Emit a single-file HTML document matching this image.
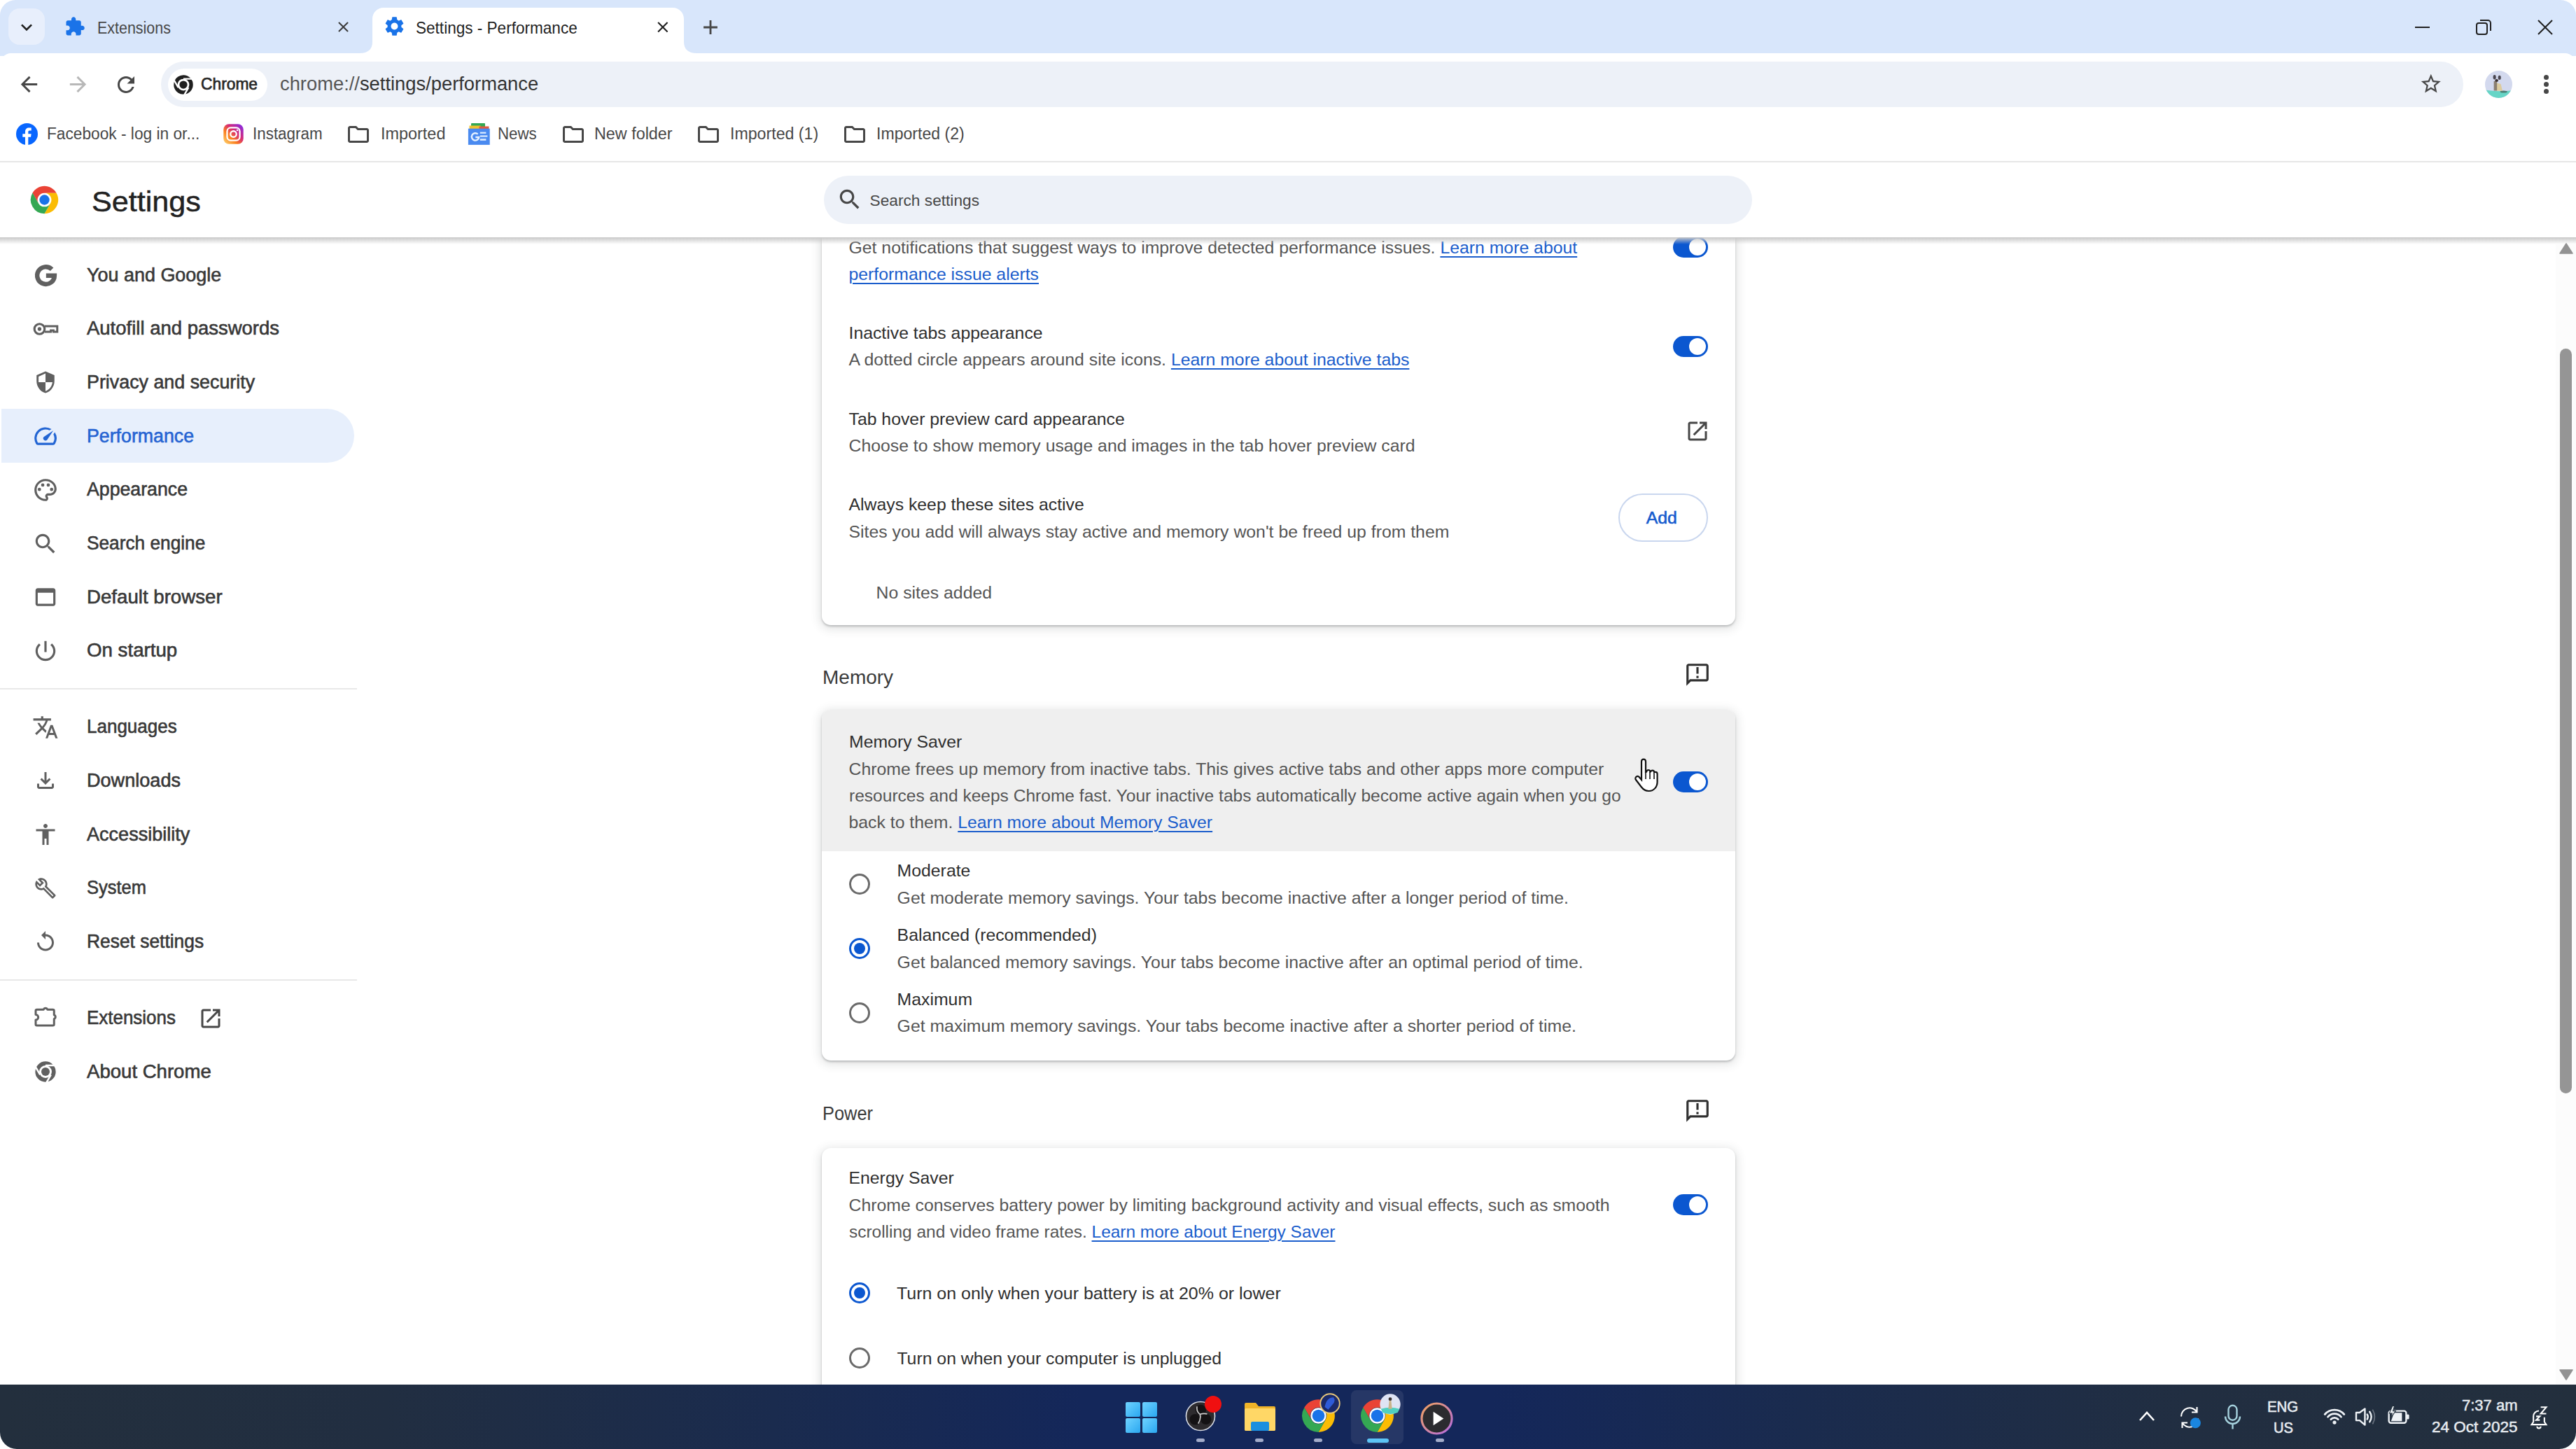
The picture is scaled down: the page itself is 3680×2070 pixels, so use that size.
<!DOCTYPE html>
<html><head><meta charset="utf-8"><title>Settings - Performance</title>
<style>
html,body{margin:0;padding:0;}
body{width:3680px;height:2070px;position:relative;overflow:hidden;background:#fff;font-family:"Liberation Sans",sans-serif;}
.t{position:absolute;white-space:pre;}
.b{position:absolute;}
</style></head><body>
<div class="b" style="left:0px;top:0px;width:3680px;height:80px;background:#d8e6fb;"></div>
<div class="b" style="left:12px;top:12px;width:52px;height:52px;background:#e8effc;border-radius:16px;"></div>
<svg class="b" style="left:22.0px;top:23.0px;" width="32.0" height="32.0" viewBox="0 0 24 24"><path fill="#1f1f1f" d="M16.59 8.59L12 13.17 7.41 8.59 6 10l6 6 6-6z"/></svg>
<svg class="b" style="left:92.0px;top:23.3px;" width="30.0" height="30.0" viewBox="0 0 24 24"><path fill="#1a73e8" d="M20.5 11H19V7c0-1.1-.9-2-2-2h-4V3.5C13 2.12 11.88 1 10.5 1S8 2.12 8 3.5V5H4c-1.1 0-1.99.9-1.99 2v3.8H3.5c1.49 0 2.7 1.21 2.7 2.7s-1.21 2.7-2.7 2.7H2V20c0 1.1.9 2 2 2h3.8v-1.5c0-1.49 1.21-2.7 2.7-2.7 1.49 0 2.7 1.21 2.7 2.7V22H17c1.1 0 2-.9 2-2v-4h1.5c1.380 0 2.5-1.12 2.5-2.5S21.88 11 20.5 11z"/></svg>
<div class="t" style="left:139.0px;top:28.5px;font-size:23px;line-height:23px;color:#474747;font-weight:400;transform:scaleX(0.932);transform-origin:0 0;">Extensions</div>
<svg class="b" style="left:477.5px;top:26.1px;" width="25.0" height="25.0" viewBox="0 0 24 24"><path fill="#3c3c3c" d="M19 6.41L17.59 5 12 10.59 6.41 5 5 6.41 10.59 12 5 17.59 6.41 19 12 13.41 17.59 19 19 17.59 13.410 12z"/></svg>
<svg class="b" style="left:514px;top:10px" width="481" height="70" viewBox="0 0 481 70"><path fill="#fff" d="M0 66 C12 66 18 60 18 50 L18 17 C18 8 25 1 34 1 L447 1 C456 1 463 8 463 17 L463 50 C463 60 469 66 481 66 L481 70 L0 70 Z"/></svg>
<svg class="b" style="left:547.0px;top:20.8px;" width="33.0" height="33.0" viewBox="0 0 24 24"><path fill="#1a73e8" d="M19.14 12.94c.04-.3.06-.61.06-.94 0-.32-.02-.64-.07-.94l2.03-1.58c.18-.14.23-.41.12-.61l-1.92-3.32c-.12-.22-.37-.29-.59-.22l-2.39.96c-.5-.38-1.03-.7-1.62-.94l-.36-2.54c-.04-.24-.24-.41-.48-.41h-3.84c-.24 0-.43.17-.47.41l-.36 2.54c-.59.24-1.13.57-1.62.94l-2.39-.96c-.22-.08-.47 0-.59.22L2.74 8.87c-.12.21-.08.47.12.61l2.03 1.58c-.05.3-.09.63-.09.94s.02.64.07.94l-2.03 1.58c-.18.14-.23.41-.12.61l1.92 3.32c.12.22.37.29.59.22l2.39-.96c.5.38 1.03.7 1.62.94l.36 2.54c.05.24.24.41.48.41h3.84c.24 0 .44-.17.47-.41l.36-2.54c.59-.24 1.13-.56 1.62-.94l2.39.96c.22.08.47 0 .59-.22l1.92-3.32c.12-.22.07-.47-.12-.61l-2.01-1.58zM12 15.6c-1.98 0-3.6-1.62-3.6-3.6s1.62-3.6 3.6-3.6 3.6 1.62 3.6 3.6-1.62 3.6-3.6 3.6z"/></svg>
<div class="t" style="left:594.3px;top:27.5px;font-size:24px;line-height:24px;color:#1f1f1f;font-weight:400;transform:scaleX(0.94);transform-origin:0 0;">Settings - Performance</div>
<svg class="b" style="left:933.6px;top:25.5px;" width="25.7" height="25.7" viewBox="0 0 24 24"><path fill="#1f1f1f" d="M19 6.41L17.59 5 12 10.59 6.41 5 5 6.41 10.59 12 5 17.59 6.41 19 12 13.41 17.59 19 19 17.59 13.410 12z"/></svg>
<svg class="b" style="left:998.4px;top:22.0px;" width="34.0" height="34.0" viewBox="0 0 24 24"><path fill="#474747" d="M19 13h-6v6h-2v-6H5v-2h6V5h2v6h6v2z"/></svg>
<div class="b" style="left:3450px;top:38px;width:21px;height:2px;background:#1f1f1f;"></div>
<svg class="b" style="left:3536px;top:27px" width="24" height="24" viewBox="0 0 24 24"><rect x="2" y="6" width="15" height="16" rx="3" fill="none" stroke="#1f1f1f" stroke-width="2"/><path d="M7 2h11a4 4 0 0 1 4 4v11" fill="none" stroke="#1f1f1f" stroke-width="2"/></svg>
<svg class="b" style="left:3624px;top:27px" width="24" height="24" viewBox="0 0 24 24"><path d="M2 2L22 22M22 2L2 22" stroke="#1f1f1f" stroke-width="2"/></svg>
<div class="b" style="left:0px;top:76px;width:3680px;height:156px;background:#fff;border-radius:16px 16px 0 0;"></div>
<svg class="b" style="left:24.3px;top:103.3px;" width="35.0" height="35.0" viewBox="0 0 24 24"><path fill="#474747" d="M20 11H7.83l5.59-5.59L12 4l-8 8 8 8 1.41-1.41L7.83 13H20v-2z"/></svg>
<svg class="b" style="left:93.5px;top:103.3px;" width="35.0" height="35.0" viewBox="0 0 24 24"><path fill="#b8b8b8" d="M12 4l-1.41 1.41L16.17 11H4v2h12.17l-5.58 5.59L12 20l8-8z"/></svg>
<svg class="b" style="left:162.0px;top:103.0px;" width="36.0" height="36.0" viewBox="0 0 24 24"><path fill="#474747" d="M17.65 6.35C16.2 4.9 14.21 4 12 4c-4.42 0-7.99 3.58-7.99 8s3.57 8 7.99 8c3.73 0 6.84-2.55 7.73-6h-2.08c-.82 2.33-3.04 4-5.65 4-3.31 0-6-2.69-6-6s2.69-6 6-6c1.66 0 3.14.69 4.22 1.78L13 11h7V4l-2.35 2.35z"/></svg>
<div class="b" style="left:230px;top:88px;width:3289px;height:65px;background:#edf1f8;border-radius:33px;"></div>
<div class="b" style="left:240px;top:98px;width:142px;height:46px;background:#fff;border-radius:23px;"></div>
<svg class="b" style="left:247px;top:106px" width="30" height="30" viewBox="0 0 24 24"><circle cx="12" cy="12" r="11" fill="#1f1f1f"/><circle cx="12" cy="12" r="6.7" fill="#fff"/><circle cx="12" cy="12" r="4.5" fill="#1f1f1f"/><path d="M12 5.3 L23 5.3 M17.8 15.35 L12.3 24.9 M6.2 15.35 L0.7 5.8" stroke="#fff" stroke-width="1.9"/></svg>
<div class="t" style="left:286.8px;top:107.8px;font-size:24.5px;line-height:24.5px;color:#262626;font-weight:400;transform:scaleX(0.93);transform-origin:0 0;-webkit-text-stroke:0.7px #262626;">Chrome</div>
<div class="t" style="left:400.0px;top:106.6px;font-size:26.8px;line-height:26.8px;color:#555555;font-weight:400;transform:scaleX(1.02);transform-origin:0 0;">chrome://<span style="color:#333">settings/performance</span></div>
<svg class="b" style="left:3455.9px;top:103.4px;" width="33.6" height="33.6" viewBox="0 0 24 24"><path fill="#474747" d="M22 9.24l-7.19-.62L12 2 9.19 8.63 2 9.24l5.46 4.73L5.82 21 12 17.27 18.18 21l-1.63-7.03L22 9.24zM12 15.4l-3.76 2.27 1-4.28-3.32-2.88 4.38-.38L12 6.1l1.71 4.04 4.38.38-3.32 2.88 1 4.28L12 15.4z"/></svg>
<svg class="b" style="left:3550px;top:101px" width="39" height="39" viewBox="0 0 38 38"><defs><clipPath id="av"><circle cx="19" cy="19" r="19"/></clipPath></defs><g clip-path="url(#av)"><rect width="38" height="38" fill="#d3d9ee"/><path d="M0 26.5 Q18 30 38 27.5 L38 38 L0 38Z" fill="#66d5c6"/><path d="M16.4 17 L22 18.5 L24.4 28 L16.4 28Z" fill="#dccb9e"/><rect x="12.3" y="14.6" width="4.4" height="13.2" fill="#8a7e70"/><ellipse cx="13.3" cy="9" rx="2" ry="3.1" fill="#4a4650"/><ellipse cx="20.2" cy="9.6" rx="2" ry="3.1" fill="#4a4650"/><ellipse cx="16.2" cy="13.6" rx="2.3" ry="1.9" fill="#3b3030"/><ellipse cx="26" cy="29.2" rx="5" ry="1.5" fill="#4b7d73"/></g></svg>
<div class="b" style="left:3634px;top:107px;width:7px;height:7px;background:#474747;border-radius:50%;"></div>
<div class="b" style="left:3634px;top:117px;width:7px;height:7px;background:#474747;border-radius:50%;"></div>
<div class="b" style="left:3634px;top:127px;width:7px;height:7px;background:#474747;border-radius:50%;"></div>
<svg class="b" style="left:23px;top:176px" width="31" height="31" viewBox="0 0 24 24"><circle cx="12" cy="12" r="12" fill="#0866ff"/><path d="M13.4 24V15.2h2.9l.45-3.4H13.4V9.7c0-1 .3-1.6 1.7-1.6h1.75V5.1c-.3 0-1.35-.13-2.55-.13-2.5 0-4.25 1.53-4.25 4.35v2.5H7.2v3.4h2.85V24z" fill="#fff"/></svg>
<div class="t" style="left:66.6px;top:180.2px;font-size:23px;line-height:23px;color:#474747;font-weight:400;transform:scaleX(0.987);transform-origin:0 0;">Facebook - log in or...</div>
<svg class="b" style="left:318px;top:176px" width="31" height="31" viewBox="0 0 24 24"><defs><linearGradient id="ig" x1="0" y1="1" x2="1" y2="0"><stop offset="0" stop-color="#feda75"/><stop offset=".35" stop-color="#fa7e1e"/><stop offset=".6" stop-color="#d62976"/><stop offset="1" stop-color="#7a2bf5"/></linearGradient></defs><rect x="1" y="1" width="22" height="22" rx="6" fill="url(#ig)"/><rect x="5" y="5" width="14" height="14" rx="4" fill="none" stroke="#fff" stroke-width="1.8"/><circle cx="12" cy="12" r="3.3" fill="none" stroke="#fff" stroke-width="1.8"/><circle cx="16.3" cy="7.7" r="1" fill="#fff"/></svg>
<div class="t" style="left:361.0px;top:180.2px;font-size:23px;line-height:23px;color:#474747;font-weight:400;transform:scaleX(0.974);transform-origin:0 0;">Instagram</div>
<svg class="b" style="left:493.5px;top:173.5px;" width="36.0" height="36.0" viewBox="0 0 24 24"><path fill="#474747" d="M9.17 6l2 2H20v10H4V6h5.17M10 4H4c-1.1 0-1.99.9-1.99 2L2 18c0 1.1.9 2 2 2h16c1.1 0 2-.9 2-2V8c0-1.1-.9-2-2-2h-8l-2-2z"/></svg>
<div class="t" style="left:543.5px;top:180.2px;font-size:23px;line-height:23px;color:#474747;font-weight:400;transform:scaleX(1.018);transform-origin:0 0;">Imported</div>
<svg class="b" style="left:668px;top:174px" width="33" height="34" viewBox="0 0 33 34"><rect x="5" y="2" width="20" height="7" rx="1" fill="#34a853"/><rect x="2.5" y="5.5" width="16" height="6" fill="#f2c12e"/><rect x="16.5" y="6.5" width="14" height="5" fill="#df5a40"/><rect x="0.9" y="9.7" width="30.8" height="23.2" fill="#4a8af0"/><path d="M14.6 17.6 A5.2 5.2 0 1 0 16.2 22 H11.3" fill="none" stroke="#e6f2ff" stroke-width="2.4"/><rect x="17.8" y="14.6" width="8.6" height="2.2" fill="#dcecff"/><rect x="17.8" y="19.4" width="10.6" height="2.2" fill="#dcecff"/><rect x="17.8" y="24.2" width="8.6" height="2.6" fill="#dcecff"/></svg>
<div class="t" style="left:711.0px;top:180.2px;font-size:23px;line-height:23px;color:#474747;font-weight:400;transform:scaleX(0.969);transform-origin:0 0;">News</div>
<svg class="b" style="left:800.5px;top:173.5px;" width="36.0" height="36.0" viewBox="0 0 24 24"><path fill="#474747" d="M9.17 6l2 2H20v10H4V6h5.17M10 4H4c-1.1 0-1.99.9-1.99 2L2 18c0 1.1.9 2 2 2h16c1.1 0 2-.9 2-2V8c0-1.1-.9-2-2-2h-8l-2-2z"/></svg>
<div class="t" style="left:849.4px;top:180.2px;font-size:23px;line-height:23px;color:#474747;font-weight:400;transform:scaleX(1.015);transform-origin:0 0;">New folder</div>
<svg class="b" style="left:993.5px;top:173.5px;" width="36.0" height="36.0" viewBox="0 0 24 24"><path fill="#474747" d="M9.17 6l2 2H20v10H4V6h5.17M10 4H4c-1.1 0-1.99.9-1.99 2L2 18c0 1.1.9 2 2 2h16c1.1 0 2-.9 2-2V8c0-1.1-.9-2-2-2h-8l-2-2z"/></svg>
<div class="t" style="left:1042.7px;top:180.2px;font-size:23px;line-height:23px;color:#474747;font-weight:400;transform:scaleX(1.007);transform-origin:0 0;">Imported (1)</div>
<svg class="b" style="left:1202.5px;top:173.5px;" width="36.0" height="36.0" viewBox="0 0 24 24"><path fill="#474747" d="M9.17 6l2 2H20v10H4V6h5.17M10 4H4c-1.1 0-1.99.9-1.99 2L2 18c0 1.1.9 2 2 2h16c1.1 0 2-.9 2-2V8c0-1.1-.9-2-2-2h-8l-2-2z"/></svg>
<div class="t" style="left:1251.6px;top:180.2px;font-size:23px;line-height:23px;color:#474747;font-weight:400;transform:scaleX(1.003);transform-origin:0 0;">Imported (2)</div>
<div class="b" style="left:0px;top:230px;width:3680px;height:2px;background:#e6e6e6;"></div>
<div class="b" style="left:1174px;top:300px;width:1305px;height:593px;background:#fff;border-radius:13px;box-shadow:0 2px 3px rgba(60,64,67,.28),0 3px 14px 3px rgba(60,64,67,.14);"></div>
<div class="b" style="left:1174px;top:1014px;width:1305px;height:501px;background:#fff;border-radius:13px;box-shadow:0 2px 3px rgba(60,64,67,.28),0 3px 14px 3px rgba(60,64,67,.14);"></div>
<div class="b" style="left:1174px;top:1640px;width:1305px;height:560px;background:#fff;border-radius:13px;box-shadow:0 2px 3px rgba(60,64,67,.28),0 3px 14px 3px rgba(60,64,67,.14);"></div>
<div class="t" style="left:1212.5px;top:341.6px;font-size:24.8px;line-height:24.8px;color:#555555;font-weight:400;">Get notifications that suggest ways to improve detected performance issues. <span style="color:#1a5dcc;text-decoration:underline;text-underline-offset:4px;text-decoration-thickness:2px">Learn more about</span></div>
<div class="t" style="left:1212.5px;top:380.0px;font-size:24.8px;line-height:24.8px;color:#555555;font-weight:400;"><span style="color:#1a5dcc;text-decoration:underline;text-underline-offset:4px;text-decoration-thickness:2px">performance issue alerts</span></div>
<div class="t" style="left:1212.5px;top:464.0px;font-size:24.8px;line-height:24.8px;color:#2e2e2e;font-weight:400;">Inactive tabs appearance</div>
<div class="t" style="left:1212.5px;top:502.0px;font-size:24.8px;line-height:24.8px;color:#555555;font-weight:400;">A dotted circle appears around site icons. <span style="color:#1a5dcc;text-decoration:underline;text-underline-offset:4px;text-decoration-thickness:2px">Learn more about inactive tabs</span></div>
<div class="t" style="left:1212.5px;top:586.6px;font-size:24.8px;line-height:24.8px;color:#2e2e2e;font-weight:400;">Tab hover preview card appearance</div>
<div class="t" style="left:1212.5px;top:625.0px;font-size:24.8px;line-height:24.8px;color:#555555;font-weight:400;">Choose to show memory usage and images in the tab hover preview card</div>
<svg class="b" style="left:2406.5px;top:598.0px;" width="36.0" height="36.0" viewBox="0 0 24 24"><path fill="#474747" d="M19 19H5V5h7V3H5c-1.11 0-2 .9-2 2v14c0 1.1.89 2 2 2h14c1.1 0 2-.9 2-2v-7h-2v7zM14 3v2h3.59l-9.83 9.83 1.41 1.41L19 6.41V10h2V3h-7z"/></svg>
<div class="t" style="left:1212.5px;top:709.4px;font-size:24.8px;line-height:24.8px;color:#2e2e2e;font-weight:400;">Always keep these sites active</div>
<div class="t" style="left:1212.5px;top:748.0px;font-size:24.8px;line-height:24.8px;color:#555555;font-weight:400;">Sites you add will always stay active and memory won&#39;t be freed up from them</div>
<div class="b" style="left:2312px;top:705px;width:128px;height:69px;box-sizing:border-box;border:2px solid #c9d6ee;border-radius:35px;"></div>
<div class="t" style="left:2351.7px;top:728.0px;font-size:24.8px;line-height:24.8px;color:#1a5dcc;font-weight:400;transform:scaleX(1.0);transform-origin:0 0;-webkit-text-stroke:0.6px #0b57d0;">Add</div>
<div class="t" style="left:1251.6px;top:835.3px;font-size:24.8px;line-height:24.8px;color:#555555;font-weight:400;">No sites added</div>
<div class="b" style="left:2390px;top:338px;width:50px;height:30px;background:#0b57d0;border-radius:15px;"></div>
<div class="b" style="left:2413px;top:341px;width:24px;height:24px;background:#fff;border-radius:50%;"></div>
<div class="b" style="left:2390px;top:480px;width:50px;height:30px;background:#0b57d0;border-radius:15px;"></div>
<div class="b" style="left:2413px;top:483px;width:24px;height:24px;background:#fff;border-radius:50%;"></div>
<div class="t" style="left:1175.0px;top:953.7px;font-size:28px;line-height:28px;color:#3a3a3a;font-weight:400;">Memory</div>
<svg class="b" style="left:2405.7px;top:945.0px;" width="38.0" height="38.0" viewBox="0 0 24 24"><path fill="#303030" d="M20 2H4c-1.1 0-1.99.9-1.99 2L2 22l4-4h14c1.1 0 2-.9 2-2V4c0-1.1-.9-2-2-2zm0 14H5.17L4 17.17V4h16v12zM11 5h2v6h-2zm0 8h2v2h-2z"/></svg>
<div class="b" style="left:1174px;top:1014px;width:1305px;height:202px;background:#efefef;border-radius:13px 13px 0 0;"></div>
<div class="t" style="left:1213.0px;top:1047.5px;font-size:24.8px;line-height:24.8px;color:#2e2e2e;font-weight:400;">Memory Saver</div>
<div class="t" style="left:1212.5px;top:1087.0px;font-size:24.8px;line-height:24.8px;color:#555555;font-weight:400;">Chrome frees up memory from inactive tabs. This gives active tabs and other apps more computer</div>
<div class="t" style="left:1212.5px;top:1125.0px;font-size:24.8px;line-height:24.8px;color:#555555;font-weight:400;transform:scaleX(0.99);transform-origin:0 0;">resources and keeps Chrome fast. Your inactive tabs automatically become active again when you go</div>
<div class="t" style="left:1212.5px;top:1163.0px;font-size:24.8px;line-height:24.8px;color:#555555;font-weight:400;">back to them. <span style="color:#1a5dcc;text-decoration:underline;text-underline-offset:4px;text-decoration-thickness:2px">Learn more about Memory Saver</span></div>
<div class="b" style="left:2390px;top:1102px;width:50px;height:30px;background:#0b57d0;border-radius:15px;"></div>
<div class="b" style="left:2413px;top:1105px;width:24px;height:24px;background:#fff;border-radius:50%;"></div>
<div class="b" style="left:1213px;top:1248px;width:30px;height:30px;box-sizing:border-box;border:3px solid #6a6a6a;border-radius:50%;"></div>
<div class="b" style="left:1213px;top:1340px;width:30px;height:30px;box-sizing:border-box;border:3.5px solid #0b57d0;border-radius:50%;"></div>
<div class="b" style="left:1220px;top:1347px;width:16px;height:16px;background:#0b57d0;border-radius:50%;"></div>
<div class="b" style="left:1213px;top:1432px;width:30px;height:30px;box-sizing:border-box;border:3px solid #6a6a6a;border-radius:50%;"></div>
<div class="t" style="left:1281.6px;top:1232.0px;font-size:24.8px;line-height:24.8px;color:#2e2e2e;font-weight:400;">Moderate</div>
<div class="t" style="left:1281.6px;top:1271.0px;font-size:24.8px;line-height:24.8px;color:#555555;font-weight:400;">Get moderate memory savings. Your tabs become inactive after a longer period of time.</div>
<div class="t" style="left:1281.6px;top:1324.0px;font-size:24.8px;line-height:24.8px;color:#2e2e2e;font-weight:400;">Balanced (recommended)</div>
<div class="t" style="left:1281.6px;top:1362.6px;font-size:24.8px;line-height:24.8px;color:#555555;font-weight:400;">Get balanced memory savings. Your tabs become inactive after an optimal period of time.</div>
<div class="t" style="left:1281.6px;top:1415.7px;font-size:24.8px;line-height:24.8px;color:#2e2e2e;font-weight:400;">Maximum</div>
<div class="t" style="left:1281.6px;top:1454.0px;font-size:24.8px;line-height:24.8px;color:#555555;font-weight:400;">Get maximum memory savings. Your tabs become inactive after a shorter period of time.</div>
<div class="t" style="left:1175.0px;top:1576.7px;font-size:28px;line-height:28px;color:#3a3a3a;font-weight:400;transform:scaleX(0.907);transform-origin:0 0;">Power</div>
<svg class="b" style="left:2405.7px;top:1568.0px;" width="38.0" height="38.0" viewBox="0 0 24 24"><path fill="#303030" d="M20 2H4c-1.1 0-1.99.9-1.99 2L2 22l4-4h14c1.1 0 2-.9 2-2V4c0-1.1-.9-2-2-2zm0 14H5.17L4 17.17V4h16v12zM11 5h2v6h-2zm0 8h2v2h-2z"/></svg>
<div class="t" style="left:1212.5px;top:1671.0px;font-size:24.8px;line-height:24.8px;color:#2e2e2e;font-weight:400;">Energy Saver</div>
<div class="t" style="left:1212.5px;top:1709.8px;font-size:24.8px;line-height:24.8px;color:#555555;font-weight:400;">Chrome conserves battery power by limiting background activity and visual effects, such as smooth</div>
<div class="t" style="left:1212.5px;top:1748.0px;font-size:24.8px;line-height:24.8px;color:#555555;font-weight:400;transform:scaleX(0.986);transform-origin:0 0;">scrolling and video frame rates. <span style="color:#1a5dcc;text-decoration:underline;text-underline-offset:4px;text-decoration-thickness:2px">Learn more about Energy Saver</span></div>
<div class="b" style="left:2390px;top:1706px;width:50px;height:30px;background:#0b57d0;border-radius:15px;"></div>
<div class="b" style="left:2413px;top:1709px;width:24px;height:24px;background:#fff;border-radius:50%;"></div>
<div class="b" style="left:1213px;top:1832px;width:30px;height:30px;box-sizing:border-box;border:3.5px solid #0b57d0;border-radius:50%;"></div>
<div class="b" style="left:1220px;top:1839px;width:16px;height:16px;background:#0b57d0;border-radius:50%;"></div>
<div class="b" style="left:1213px;top:1925px;width:30px;height:30px;box-sizing:border-box;border:3px solid #6a6a6a;border-radius:50%;"></div>
<div class="t" style="left:1281.4px;top:1836.3px;font-size:24.8px;line-height:24.8px;color:#2e2e2e;font-weight:400;transform:scaleX(1.007);transform-origin:0 0;">Turn on only when your battery is at 20% or lower</div>
<div class="t" style="left:1281.4px;top:1928.8px;font-size:24.8px;line-height:24.8px;color:#2e2e2e;font-weight:400;">Turn on when your computer is unplugged</div>
<div class="b" style="left:0px;top:232px;width:3680px;height:107px;background:#fff;"></div>
<div class="b" style="left:0px;top:339px;width:3680px;height:10px;background:linear-gradient(#c8c8c8,rgba(255,255,255,0));"></div>
<svg class="b" style="left:42px;top:264px" width="43" height="43" viewBox="0 0 48 48"><circle cx="24" cy="24" r="22" fill="#fff"/><path d="M4.95 13 A22 22 0 0 1 43.05 13 L24 13 A11 11 0 0 0 14.47 29.5Z" fill="#ea4335"/><path d="M43.05 13 A22 22 0 0 1 24 46 L33.53 29.5 A11 11 0 0 0 24 13Z" fill="#fbbc04"/><path d="M24 46 A22 22 0 0 1 5.05 12.9 L14.47 29.5 A11 11 0 0 0 33.53 29.5Z" fill="#34a853"/><circle cx="24" cy="24" r="10" fill="#fff"/><circle cx="24" cy="24" r="8" fill="#1a73e8"/></svg>
<div class="t" style="left:130.5px;top:267.4px;font-size:41.5px;line-height:41.5px;color:#222222;font-weight:400;transform:scaleX(1.04);transform-origin:0 0;-webkit-text-stroke:0.5px #222;">Settings</div>
<div class="b" style="left:1177px;top:251px;width:1326px;height:69px;background:#edf1f8;border-radius:35px;"></div>
<svg class="b" style="left:1195.4px;top:265.8px;" width="38.0" height="38.0" viewBox="0 0 24 24"><path fill="#474747" d="M15.5 14h-.79l-.28-.27C15.41 12.59 16 11.11 16 9.5 16 5.91 13.09 3 9.5 3S3 5.91 3 9.5 5.91 16 9.5 16c1.61 0 3.09-.59 4.23-1.57l.27.28v.79l5 4.99L20.49 19l-4.99-5zm-6 0C7.01 14 5 11.990 5 9.5S7.01 5 9.5 5 14 7.01 14 9.5 11.99 14 9.5 14z"/></svg>
<div class="t" style="left:1242.6px;top:275.4px;font-size:22.7px;line-height:22.7px;color:#474747;font-weight:400;">Search settings</div>
<div class="b" style="left:2px;top:584px;width:504px;height:77px;background:#e7effc;border-radius:0 39px 39px 0;"></div>
<svg class="b" style="left:45.7px;top:373.5px" width="39" height="39" viewBox="0 0 24 24"><path d="M17.3 6.6 A7.6 7.6 0 1 0 19.6 12.2 H12.2" fill="none" stroke="#606060" stroke-width="4"/></svg>
<div class="t" style="left:123.7px;top:379.7px;font-size:27px;line-height:27px;color:#383838;font-weight:400;transform:scaleX(0.998);transform-origin:0 0;-webkit-text-stroke:0.6px #383838;">You and Google</div>
<svg class="b" style="left:46px;top:450.8px" width="38" height="38" viewBox="0 0 24 24"><circle cx="6.6" cy="12" r="4.6" fill="none" stroke="#606060" stroke-width="2"/><circle cx="6.6" cy="12" r="1.7" fill="#606060"/><path d="M11.3 9.5 H22.6 V14.5 H19.2 V13.3 H16.8 V14.5 H11.3" fill="none" stroke="#606060" stroke-width="1.9"/></svg>
<div class="t" style="left:123.7px;top:456.4px;font-size:27px;line-height:27px;color:#383838;font-weight:400;transform:scaleX(1.018);transform-origin:0 0;-webkit-text-stroke:0.6px #383838;">Autofill and passwords</div>
<svg class="b" style="left:48.0px;top:529.4px;" width="34.0" height="34.0" viewBox="0 0 24 24"><path fill="#606060" d="M12 1L3 5v6c0 5.55 3.84 10.74 9 12 5.16-1.26 9-6.45 9-12V5l-9-4zm0 10.99h7c-.53 4.12-3.28 7.79-7 8.94V12H5V6.3l7-3.11v8.8z"/></svg>
<div class="t" style="left:123.7px;top:533.1px;font-size:27px;line-height:27px;color:#383838;font-weight:400;transform:scaleX(0.994);transform-origin:0 0;-webkit-text-stroke:0.6px #383838;">Privacy and security</div>
<svg class="b" style="left:46.0px;top:604.1px;" width="38.0" height="38.0" viewBox="0 0 24 24"><path fill="#2365d3" d="M20.38 8.57l-1.23 1.85a8 8 0 0 1-.22 7.58H5.07A8 8 0 0 1 15.58 6.85l1.85-1.23A10 10 0 0 0 3.35 19a2 2 0 0 0 1.72 1h13.85a2 2 0 0 0 1.74-1 10 10 0 0 0-.27-10.44zm-9.79 6.84a2 2 0 0 0 2.83 0l5.66-8.49-8.49 5.66a2 2 0 0 0 0 2.83z"/></svg>
<div class="t" style="left:123.7px;top:609.8px;font-size:27px;line-height:27px;color:#2563d2;font-weight:400;transform:scaleX(0.99);transform-origin:0 0;-webkit-text-stroke:0.6px #2563d2;">Performance</div>
<svg class="b" style="left:46.0px;top:680.8px;" width="38.0" height="38.0" viewBox="0 0 24 24"><path fill="#606060" d="M12 22C6.49 22 2 17.51 2 12S6.49 2 12 2s10 4.04 10 9c0 3.31-2.69 6-6 6h-1.77c-.28 0-.5.22-.5.5 0 .12.05.23.13.33.41.47.64 1.06.64 1.67 0 1.38-1.12 2.5-2.5 2.5zm0-18c-4.41 0-8 3.59-8 8s3.59 8 8 8c.28 0 .5-.22.5-.5 0-.16-.08-.28-.14-.35-.41-.46-.63-1.05-.63-1.65 0-1.38 1.12-2.5 2.5-2.5H16c2.21 0 4-1.79 4-4 0-3.86-3.59-7-8-7zM6.5 10a1.5 1.5 0 1 0 0 3 1.5 1.5 0 0 0 0-3zM9.5 6a1.5 1.5 0 1 0 0 3 1.5 1.5 0 0 0 0-3zM14.5 6a1.5 1.5 0 1 0 0 3 1.5 1.5 0 0 0 0-3zM17.5 10a1.5 1.5 0 1 0 0 3 1.5 1.5 0 0 0 0-3z"/></svg>
<div class="t" style="left:123.7px;top:686.4px;font-size:27px;line-height:27px;color:#383838;font-weight:400;transform:scaleX(0.989);transform-origin:0 0;-webkit-text-stroke:0.6px #383838;">Appearance</div>
<svg class="b" style="left:46.0px;top:757.5px;" width="38.0" height="38.0" viewBox="0 0 24 24"><path fill="#606060" d="M15.5 14h-.79l-.28-.27C15.41 12.59 16 11.11 16 9.5 16 5.91 13.09 3 9.5 3S3 5.91 3 9.5 5.91 16 9.5 16c1.61 0 3.09-.59 4.23-1.57l.27.28v.79l5 4.99L20.49 19l-4.99-5zm-6 0C7.01 14 5 11.990 5 9.5S7.01 5 9.5 5 14 7.01 14 9.5 11.99 14 9.5 14z"/></svg>
<div class="t" style="left:123.7px;top:763.1px;font-size:27px;line-height:27px;color:#383838;font-weight:400;transform:scaleX(0.972);transform-origin:0 0;-webkit-text-stroke:0.6px #383838;">Search engine</div>
<svg class="b" style="left:46.0px;top:834.1px;" width="38.0" height="38.0" viewBox="0 0 24 24"><path fill="#606060" d="M19 4H5c-1.11 0-2 .9-2 2v12c0 1.1.89 2 2 2h14c1.1 0 2-.9 2-2V6c0-1.1-.89-2-2-2zm0 14H5V8h14v10z"/></svg>
<div class="t" style="left:123.7px;top:839.8px;font-size:27px;line-height:27px;color:#383838;font-weight:400;transform:scaleX(1.024);transform-origin:0 0;-webkit-text-stroke:0.6px #383838;">Default browser</div>
<svg class="b" style="left:46.0px;top:910.8px;" width="38.0" height="38.0" viewBox="0 0 24 24"><path fill="#606060" d="M13 3h-2v10h2V3zm4.83 2.17l-1.42 1.42C17.99 7.86 19 9.810 19 12c0 3.87-3.13 7-7 7s-7-3.13-7-7c0-2.19 1.01-4.14 2.58-5.42L6.17 5.17C4.23 6.82 3 9.26 3 12c0 4.97 4.03 9 9 9s9-4.03 9-9c0-2.74-1.23-5.18-3.17-6.83z"/></svg>
<div class="t" style="left:123.7px;top:916.4px;font-size:27px;line-height:27px;color:#383838;font-weight:400;transform:scaleX(1.025);transform-origin:0 0;-webkit-text-stroke:0.6px #383838;">On startup</div>
<svg class="b" style="left:46.0px;top:1019.5px;" width="38.0" height="38.0" viewBox="0 0 24 24"><path fill="#606060" d="M12.87 15.07l-2.54-2.51.03-.03c1.74-1.94 2.98-4.17 3.71-6.53H17V4h-7V2H8v2H1v1.99h11.17C11.5 7.92 10.44 9.75 9 11.35 8.07 10.32 7.3 9.19 6.69 8h-2c.73 1.63 1.73 3.17 2.98 4.56l-5.09 5.02L4 19l5-5 3.11 3.11.76-2.04zM18.5 10h-2L12 22h2l1.12-3h4.75L21 22h2l-4.5-12zm-2.62 7l1.62-4.33L19.12 17h-3.24z"/></svg>
<div class="t" style="left:123.7px;top:1025.1px;font-size:27px;line-height:27px;color:#383838;font-weight:400;transform:scaleX(0.963);transform-origin:0 0;-webkit-text-stroke:0.6px #383838;">Languages</div>
<svg class="b" style="left:47.0px;top:1097.2px;" width="36.0" height="36.0" viewBox="0 0 24 24"><path fill="#606060" d="M18 15v3H6v-3H4v3c0 1.1.9 2 2 2h12c1.1 0 2-.9 2-2v-3h-2zm-1-4l-1.41-1.41L13 12.17V4h-2v8.17L8.41 9.59 7 11l5 5 5-5z"/></svg>
<div class="t" style="left:123.7px;top:1101.8px;font-size:27px;line-height:27px;color:#383838;font-weight:400;transform:scaleX(1.003);transform-origin:0 0;-webkit-text-stroke:0.6px #383838;">Downloads</div>
<svg class="b" style="left:47.0px;top:1173.8px;" width="36.0" height="36.0" viewBox="0 0 24 24"><path fill="#606060" d="M12 2c1.1 0 2 .9 2 2s-.9 2-2 2-2-.9-2-2 .9-2 2-2zm9 7h-6v13h-2v-6h-2v6H9V9H3V7h18v2z"/></svg>
<div class="t" style="left:123.7px;top:1178.5px;font-size:27px;line-height:27px;color:#383838;font-weight:400;transform:scaleX(1.002);transform-origin:0 0;-webkit-text-stroke:0.6px #383838;">Accessibility</div>
<svg class="b" style="left:49.0px;top:1252.5px;" width="32.0" height="32.0" viewBox="0 0 24 24"><path fill="#606060" d="M22.61 18.99l-9.08-9.08c.93-2.34.45-5.1-1.44-7C9.79.61 6.21.4 3.66 2.26L7.5 6.11 6.08 7.52 2.25 3.69C.39 6.23.6 9.82 2.9 12.11c1.86 1.86 4.57 2.35 6.89 1.48l9.11 9.11c.39.39 1.02.39 1.41 0l2.3-2.3c.4-.38.4-1.01 0-1.41zm-3 1.6l-9.46-9.46c-.61.45-1.29.72-2 .82-1.36.2-2.79-.21-3.83-1.25C3.37 9.76 2.93 8.5 3 7.26l3.09 3.09 4.24-4.24-3.09-3.09c1.24-.07 2.49.37 3.44 1.31 1.08 1.08 1.49 2.57 1.24 3.96-.12.71-.42 1.37-.88 1.96l9.45 9.45-.88.89z"/></svg>
<div class="t" style="left:123.7px;top:1255.2px;font-size:27px;line-height:27px;color:#383838;font-weight:400;transform:scaleX(0.944);transform-origin:0 0;-webkit-text-stroke:0.6px #383838;">System</div>
<svg class="b" style="left:47.0px;top:1327.2px;" width="36.0" height="36.0" viewBox="0 0 24 24"><path fill="#606060" d="M12 5V2L8 6l4 4V7c3.31 0 6 2.69 6 6s-2.69 6-6 6-6-2.69-6-6H4c0 4.42 3.58 8 8 8s8-3.58 8-8-3.58-8-8-8z"/></svg>
<div class="t" style="left:123.7px;top:1331.8px;font-size:27px;line-height:27px;color:#383838;font-weight:400;transform:scaleX(0.977);transform-origin:0 0;-webkit-text-stroke:0.6px #383838;">Reset settings</div>
<svg class="b" style="left:44px;top:1429.5px" width="42" height="42" viewBox="0 0 24 24"><path d="M5 7 H10.4 A1.7 1.7 0 0 1 13.6 7 H18 Q19 7 19 8 V11.4 A1.7 1.7 0 0 1 19 14.6 V19 Q19 20 18 20 H5 Q4 20 4 19 V15.4 A2.1 2.1 0 0 0 4 11.2 V8 Q4 7 5 7Z" fill="none" stroke="#606060" stroke-width="1.7" stroke-linejoin="round"/></svg>
<div class="t" style="left:123.7px;top:1441.1px;font-size:27px;line-height:27px;color:#383838;font-weight:400;transform:scaleX(0.961);transform-origin:0 0;-webkit-text-stroke:0.6px #383838;">Extensions</div>
<svg class="b" style="left:49px;top:1515.2px" width="32" height="32" viewBox="0 0 24 24"><circle cx="12" cy="12" r="11" fill="#606060"/><circle cx="12" cy="12" r="6.7" fill="#fff"/><circle cx="12" cy="12" r="4.5" fill="#606060"/><path d="M12 5.3 L23 5.3 M17.8 15.35 L12.3 24.9 M6.2 15.35 L0.7 5.8" stroke="#fff" stroke-width="1.9"/></svg>
<div class="t" style="left:123.7px;top:1517.8px;font-size:27px;line-height:27px;color:#383838;font-weight:400;transform:scaleX(1.021);transform-origin:0 0;-webkit-text-stroke:0.6px #383838;">About Chrome</div>
<svg class="b" style="left:283.0px;top:1436.5px;" width="36.0" height="36.0" viewBox="0 0 24 24"><path fill="#474747" d="M19 19H5V5h7V3H5c-1.11 0-2 .9-2 2v14c0 1.1.89 2 2 2h14c1.1 0 2-.9 2-2v-7h-2v7zM14 3v2h3.59l-9.83 9.83 1.41 1.41L19 6.41V10h2V3h-7z"/></svg>
<div class="b" style="left:0px;top:983px;width:510px;height:2px;background:#e8e8e8;"></div>
<div class="b" style="left:0px;top:1399px;width:510px;height:2px;background:#e8e8e8;"></div>
<svg class="b" style="left:2333px;top:1083px" width="40" height="50" viewBox="0 0 20 25"><path d="M6 2.5c0-1 .7-1.7 1.5-1.7S9 1.5 9 2.5V10l.5-.2c.3-1 .8-1.3 1.4-1.3.8 0 1.3.6 1.3 1.3l.3-.1c.3-.6.7-.9 1.3-.9.8 0 1.3.6 1.3 1.4.2-.2.5-.3.9-.3.8 0 1.3.6 1.3 1.5V17c0 3.5-2.4 6.5-6 6.5-2.6 0-4-1-5.5-3L2 15.5c-.6-.8-.4-1.7.3-2.2.7-.5 1.6-.3 2.1.3L6 15.5z" fill="#fff" stroke="#111" stroke-width="1.1"/><path d="M9 10v5M12 10v5M15 11v4" stroke="#111" stroke-width=".8"/></svg>
<div class="b" style="left:3651px;top:349px;width:29px;height:1629px;background:#fcfcfc;"></div>
<svg class="b" style="left:3656px;top:347px" width="20" height="16" viewBox="0 0 20 16"><path d="M10 1 L19 15 L1 15Z" fill="#939393" stroke="#939393" stroke-width="1.5" stroke-linejoin="round"/></svg>
<svg class="b" style="left:3656px;top:1956px" width="20" height="16" viewBox="0 0 20 16"><path d="M10 15 L19 1 L1 1Z" fill="#939393" stroke="#939393" stroke-width="1.5" stroke-linejoin="round"/></svg>
<div class="b" style="left:3657px;top:498px;width:17px;height:1064px;background:#959595;border-radius:9px;"></div>
<div class="b" style="left:0px;top:1978px;width:3680px;height:92px;background:linear-gradient(90deg,#232f3d 0%,#212e41 15%,#1a2b4e 30%,#14275a 42%,#14275a 58%,#1a2b4e 70%,#212e41 85%,#232f3d 100%);"></div>
<div class="b" style="left:1608px;top:2003px;width:21px;height:21px;background:linear-gradient(135deg,#6fd3ff,#2aa7f0);border-radius:2px;"></div>
<div class="b" style="left:1632px;top:2003px;width:21px;height:21px;background:linear-gradient(135deg,#6fd3ff,#2aa7f0);border-radius:2px;"></div>
<div class="b" style="left:1608px;top:2026px;width:21px;height:21px;background:linear-gradient(135deg,#6fd3ff,#2aa7f0);border-radius:2px;"></div>
<div class="b" style="left:1632px;top:2026px;width:21px;height:21px;background:linear-gradient(135deg,#6fd3ff,#2aa7f0);border-radius:2px;"></div>
<svg class="b" style="left:1693px;top:2001px" width="44" height="44" viewBox="0 0 24 24"><circle cx="12" cy="12" r="11.2" fill="#2d2b2e" stroke="#d9dde6" stroke-width="0.9"/><circle cx="12.2" cy="7.3" r="4.2" fill="#141214"/><circle cx="16.2" cy="14.4" r="4.2" fill="#141214"/><circle cx="7.8" cy="14.6" r="4.2" fill="#141214"/><path d="M9.3 4.5 Q8.7 8.5 11.6 10.6 Q12.6 14 10.2 17.8" fill="none" stroke="#cfcfcf" stroke-width="0.9"/><path d="M11.6 10.6 Q14.5 9.6 17.2 10.4" fill="none" stroke="#cfcfcf" stroke-width="0.9"/></svg>
<div class="b" style="left:1721px;top:1994px;width:24px;height:24px;background:#f01010;border-radius:50%;"></div>
<svg class="b" style="left:1776px;top:2002px" width="48" height="44" viewBox="0 0 48 44"><path d="M2 4 Q2 2 4 2 L18 2 L22 7 L44 7 Q46 7 46 9 L46 40 Q46 42 44 42 L4 42 Q2 42 2 40Z" fill="#f0b429"/><rect x="2" y="10" width="44" height="32" rx="2" fill="#ffd766"/><rect x="11" y="29" width="26" height="13" rx="2" fill="#1b8fe0"/></svg>
<svg class="b" style="left:1858px;top:1997px" width="51" height="51" viewBox="0 0 48 48"><path d="M4.95 13 A22 22 0 0 1 43.05 13 L24 13 A11 11 0 0 0 14.47 29.5Z" fill="#ea4335"/><path d="M43.05 13 A22 22 0 0 1 24 46 L33.53 29.5 A11 11 0 0 0 24 13Z" fill="#fbbc04"/><path d="M24 46 A22 22 0 0 1 5.05 12.9 L14.47 29.5 A11 11 0 0 0 33.53 29.5Z" fill="#34a853"/><circle cx="24" cy="24" r="10.5" fill="#fff"/><circle cx="24" cy="24" r="8.3" fill="#1a73e8"/></svg>
<svg class="b" style="left:1885px;top:1990px" width="30" height="30" viewBox="0 0 24 24"><circle cx="12" cy="12" r="11" fill="#1b2a6a" stroke="#e7c77a" stroke-width="1.5"/><path d="M6 16 Q8 5 16 5 Q19 9 15 13 L10 19Z" fill="#2e5bd8"/></svg>
<div class="b" style="left:1930px;top:1986px;width:75px;height:77px;background:rgba(255,255,255,0.08);border-radius:8px;"></div>
<svg class="b" style="left:1942px;top:1997px" width="51" height="51" viewBox="0 0 48 48"><path d="M4.95 13 A22 22 0 0 1 43.05 13 L24 13 A11 11 0 0 0 14.47 29.5Z" fill="#ea4335"/><path d="M43.05 13 A22 22 0 0 1 24 46 L33.53 29.5 A11 11 0 0 0 24 13Z" fill="#fbbc04"/><path d="M24 46 A22 22 0 0 1 5.05 12.9 L14.47 29.5 A11 11 0 0 0 33.53 29.5Z" fill="#34a853"/><circle cx="24" cy="24" r="10.5" fill="#fff"/><circle cx="24" cy="24" r="8.3" fill="#1a73e8"/></svg>
<svg class="b" style="left:1970px;top:1990px" width="32" height="32" viewBox="0 0 24 24"><circle cx="12" cy="12" r="11" fill="#dfe4f4"/><path d="M2 17 Q12 14 22 17 L20 21 Q12 24 4 21Z" fill="#4fd0c0"/><path d="M11 8 L13 8 L14 17 L10 17Z" fill="#c9b48a"/><circle cx="12" cy="6.5" r="1.8" fill="#3a3230"/></svg>
<svg class="b" style="left:2029px;top:2003px" width="47" height="47" viewBox="0 0 24 24"><defs><linearGradient id="mp" x1="0" y1="0" x2="1" y2="1"><stop offset="0" stop-color="#f2a35e"/><stop offset="1" stop-color="#b36be0"/></linearGradient></defs><circle cx="12" cy="12" r="11" fill="#2b2b2f" stroke="url(#mp)" stroke-width="1.6"/><path d="M9.5 7 L17 12 L9.5 17Z" fill="#fff"/></svg>
<div class="b" style="left:1709px;top:2055px;width:12px;height:5px;background:#a3acca;border-radius:3px;"></div>
<div class="b" style="left:1793px;top:2055px;width:12px;height:5px;background:#a3acca;border-radius:3px;"></div>
<div class="b" style="left:1877px;top:2055px;width:12px;height:5px;background:#a3acca;border-radius:3px;"></div>
<div class="b" style="left:2051px;top:2055px;width:12px;height:5px;background:#a3acca;border-radius:3px;"></div>
<div class="b" style="left:1953px;top:2055px;width:31px;height:6px;background:#5cc4f5;border-radius:3px;"></div>
<svg class="b" style="left:3054px;top:2014px" width="26" height="18" viewBox="0 0 26 18"><path d="M3 15 L13 4 L23 15" fill="none" stroke="#fff" stroke-width="2.6"/></svg>
<svg class="b" style="left:3110px;top:2005px" width="36" height="40" viewBox="0 0 24 26"><path d="M4 12 A8 8 0 0 1 19 8" fill="none" stroke="#fff" stroke-width="1.4"/><path d="M19 3 L19 8 L14 8" fill="none" stroke="#fff" stroke-width="1.4"/><path d="M20 14 A8 8 0 0 1 5 18" fill="none" stroke="#fff" stroke-width="1.4"/><path d="M5 23 L5 18 L10 18" fill="none" stroke="#fff" stroke-width="1.4"/><circle cx="17.6" cy="18.2" r="5" fill="#1a86e0"/></svg>
<svg class="b" style="left:3176px;top:2005px" width="27" height="40" viewBox="0 0 18 26"><rect x="5" y="1.5" width="8" height="14" rx="4" fill="none" stroke="#a6d2de" stroke-width="1.6"/><path d="M2 12 A7 7 0 0 0 16 12 M9 19 V24" fill="none" stroke="#a6d2de" stroke-width="1.6"/></svg>
<div class="t" style="left:3239.4px;top:1999.8px;font-size:21.5px;line-height:21.5px;color:#e6ebf0;font-weight:400;transform:scaleX(0.948);transform-origin:0 0;-webkit-text-stroke:0.6px #e6ebf0;">ENG</div>
<div class="t" style="left:3248.0px;top:2029.8px;font-size:21.5px;line-height:21.5px;color:#e6ebf0;font-weight:400;transform:scaleX(0.936);transform-origin:0 0;-webkit-text-stroke:0.6px #e6ebf0;">US</div>
<svg class="b" style="left:3316.9px;top:2008.8px" width="36" height="27" viewBox="0 0 32 24"><path d="M3.74 10.21 A16 16 0 0 1 28.26 10.21 M7.57 13.43 A11 11 0 0 1 24.43 13.43 M11.4 16.64 A6 6 0 0 1 20.6 16.64" fill="none" stroke="#eef2f6" stroke-width="2.5" stroke-linecap="round"/><circle cx="16" cy="20.5" r="2.3" fill="#eef2f6"/></svg>
<svg class="b" style="left:3362px;top:2006px" width="34" height="34" viewBox="0 0 24 24"><path d="M2.8 8.5 H6.3 L11.6 4.6 V20.9 L6.3 16.3 H2.8Z" fill="none" stroke="#eef2f6" stroke-width="1.7" stroke-linejoin="round"/><path d="M13.9 10.2 Q15.4 12.7 13.9 15.2 M16.4 7.6 Q19.8 12.7 16.4 17.8" fill="none" stroke="#eef2f6" stroke-width="1.7" stroke-linecap="round"/><path d="M19.3 5.4 Q23.6 12.7 19.3 20" fill="none" stroke="#eef2f6" stroke-opacity=".35" stroke-width="1.2"/></svg>
<svg class="b" style="left:3408px;top:2006px" width="36" height="36" viewBox="0 0 24 24"><rect x="3.1" y="6.4" width="16.5" height="11.4" rx="2" fill="none" stroke="#eef2f6" stroke-width="1.6"/><rect x="19.8" y="9.6" width="2.6" height="4.8" rx="1" fill="#eef2f6"/><path d="M8 8.2 H15.6 V16.1 H5.2 Z" fill="#eef2f6"/><path d="M6.6 1.6 L3.6 8.6 H6.2 L4.6 13.4 L9.6 6.4 H7 L8.4 1.6Z" fill="#eef2f6" stroke="#222f3c" stroke-width=".7"/></svg>
<div class="t" style="left:3517.0px;top:1997.4px;font-size:22px;line-height:22px;color:#e6ebf0;font-weight:400;-webkit-text-stroke:0.5px #e6ebf0;">7:37 am</div>
<div class="t" style="left:3474.0px;top:2027.9px;font-size:22px;line-height:22px;color:#e6ebf0;font-weight:400;transform:scaleX(1.022);transform-origin:0 0;-webkit-text-stroke:0.5px #e6ebf0;">24 Oct 2025</div>
<svg class="b" style="left:3611px;top:2009px" width="32" height="34" viewBox="0 0 24 26"><path d="M6 20 L4 20 L6 17 L6 11 A6 6 0 0 1 12 5 M18 12 L18 17 L20 20 L4 20" fill="none" stroke="#fff" stroke-width="1.6"/><path d="M10 22 A2 2 0 0 0 14 22" fill="none" stroke="#fff" stroke-width="1.6"/><path d="M14 1 L20 1 L14 8 L20 8" fill="none" stroke="#fff" stroke-width="1.6"/><path d="M9 11 L13 11 L9 15 L13 15" fill="none" stroke="#fff" stroke-width="1.6"/></svg>
<svg class="b" style="left:0;top:0" width="22" height="22" viewBox="0 0 22 22"><path d="M0 0 L22 0 A22 22 0 0 0 0 22Z" fill="#fff"/></svg>
<svg class="b" style="left:3658px;top:0" width="22" height="22" viewBox="0 0 22 22"><path d="M22 0 L0 0 A22 22 0 0 1 22 22Z" fill="#fff"/></svg>
<svg class="b" style="left:0;top:2046px" width="24" height="24" viewBox="0 0 24 24"><path d="M0 24 L24 24 A24 24 0 0 1 0 0Z" fill="#fff"/></svg>
<svg class="b" style="left:3656px;top:2046px" width="24" height="24" viewBox="0 0 24 24"><path d="M24 24 L0 24 A24 24 0 0 0 24 0Z" fill="#fff"/></svg>
</body></html>
